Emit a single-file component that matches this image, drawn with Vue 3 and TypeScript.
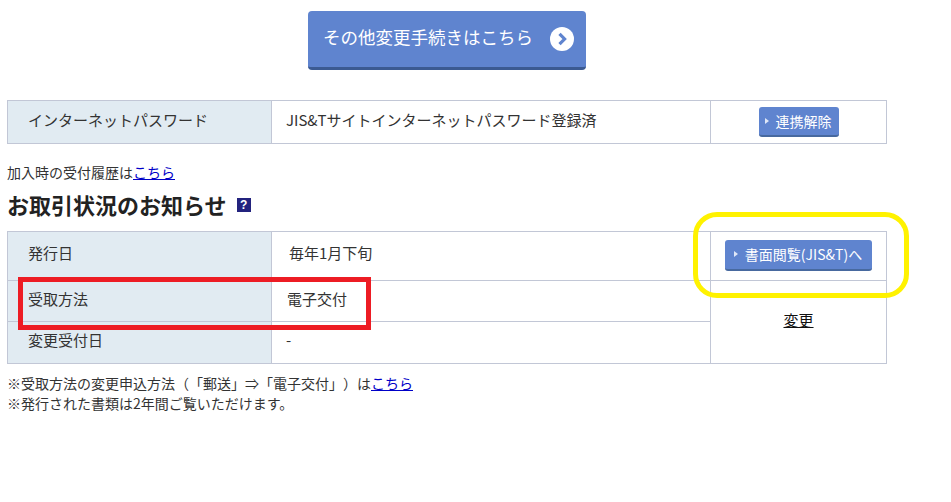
<script setup lang="ts">
const link = 'こちら'
</script>

<template>
  <main class="page">
    <div class="cta-wrap">
      <a class="cta">
        <span>その他変更手続きはこちら</span>
        <svg class="cta-icon" viewBox="0 0 24 24" width="24" height="24" aria-hidden="true">
          <circle cx="12" cy="12" r="12" fill="#fff" />
          <path d="M9.5 6.8 14.6 12l-5.1 5.2" fill="none" stroke="#5f84cf" stroke-width="3.2" />
        </svg>
      </a>
    </div>

    <table class="info first">
      <tbody>
        <tr class="r44">
          <th>インターネットパスワード</th>
          <td class="value">JIS&amp;Tサイトインターネットパスワード登録済</td>
          <td class="action"><a class="btn"><i class="tri"></i>連携解除</a></td>
        </tr>
      </tbody>
    </table>

    <p class="history">加入時の受付履歴は<a class="link">{{ link }}</a></p>

    <h2 class="title">
      お取引状況のお知らせ
      <span class="help">?</span>
    </h2>

    <table class="info second">
      <tbody>
        <tr class="r50">
          <th>発行日</th>
          <td class="value indent">毎年1月下旬</td>
          <td class="action lift"><a class="btn wide"><i class="tri"></i>書面閲覧(JIS&amp;T)へ</a></td>
        </tr>
        <tr class="r41">
          <th>受取方法</th>
          <td class="value shift">電子交付</td>
          <td class="action change" rowspan="2"><a class="plain">変更</a></td>
        </tr>
        <tr class="r42">
          <th>変更受付日</th>
          <td class="value">-</td>
        </tr>
      </tbody>
    </table>

    <div class="notes">
      <p>※受取方法の変更申込方法（「郵送」⇒「電子交付」）は<a class="link">{{ link }}</a></p>
      <p>※発行された書類は2年間ご覧いただけます。</p>
    </div>

    <div class="mark red"></div>
    <div class="mark yellow"></div>
  </main>
</template>

<style scoped>
.page {
  position: relative;
  width: 880px;
  height: 502px;
  margin-left: 7px;
  box-sizing: border-box;
  padding-top: 11px;
  color: #333;
  font-family: "Noto Sans CJK JP", "Liberation Sans", sans-serif;
  font-size: 14px;
  text-spacing-trim: space-all;
}
.cta-wrap {
  display: flex;
  justify-content: center;
}
.cta {
  display: flex;
  align-items: center;
  justify-content: space-between;
  box-sizing: border-box;
  width: 278px;
  height: 59px;
  padding: 0 12px 0 15px;
  border-radius: 4px;
  border-bottom: 3px solid #3b5a92;
  background: #5f84cf;
  color: #fff;
  font-size: 17.5px;
}
.cta span {
  position: relative;
  top: -3px;
}
.info {
  width: 880px;
  table-layout: fixed;
  border-collapse: collapse;
}
.first {
  margin-top: 30px;
}
.info th,
.info td {
  border: 1px solid #c2c7d6;
  padding: 0;
  font-weight: 400;
  text-align: left;
  vertical-align: middle;
}
.info th {
  width: 264px;
  box-sizing: border-box;
  padding-left: 20px;
  padding-bottom: 5px;
  background: #e1ebf2;
  font-size: 15px;
}
.info td.value {
  width: 439px;
  box-sizing: border-box;
  padding-left: 14px;
  padding-bottom: 5px;
  font-size: 15px;
}
.info td.indent {
  padding-left: 17px;
}
.info td.shift {
  padding-left: 15px;
}
.info td.action {
  text-align: center;
}
.info td.lift {
  padding-bottom: 2px;
}
.r50 th,
.info .r50 td.value {
  padding-bottom: 8px;
}
.r42 th,
.info .r42 td.value {
  padding-bottom: 7px;
}
.r44 { height: 43px; }
.r50 { height: 49px; }
.r41 { height: 41px; }
.r42 { height: 42px; }
.btn {
  display: inline-flex;
  align-items: center;
  box-sizing: border-box;
  height: 30px;
  padding: 0 7px 0 6px;
  border-radius: 3px;
  border-bottom: 2px solid #47699f;
  background: #5f84cf;
  color: #fff;
  font-size: 14px;
  white-space: nowrap;
}
.btn.wide {
  height: 31px;
  padding: 0 10px 0 9px;
}
.tri {
  width: 0;
  height: 0;
  margin-right: 7px;
  border-left: 4px solid #dfe7f7;
  border-top: 3px solid transparent;
  border-bottom: 3px solid transparent;
}
.history {
  margin: 19px 0 0;
  font-size: 14px;
  line-height: 19px;
}
.link {
  color: #0000c8;
  text-decoration: underline;
}
.title {
  display: flex;
  align-items: center;
  gap: 10px;
  margin: 7px 0 12px;
  font-size: 22px;
  font-weight: 700;
  line-height: 30px;
  color: #222;
}
.help {
  display: flex;
  align-items: center;
  justify-content: center;
  width: 14px;
  height: 14px;
  margin-top: 2px;
  background: #23237e;
  color: #fff;
  font-family: "Liberation Sans", sans-serif;
  font-size: 12px;
  font-weight: 700;
}
.info td.change {
  padding-bottom: 6px;
}
.plain {
  color: #111;
  text-decoration: underline;
  font-size: 15px;
}
.notes {
  margin-top: 9px;
  font-size: 14px;
  line-height: 20px;
}
.notes p {
  margin: 0;
}
.mark {
  position: absolute;
  box-sizing: border-box;
  pointer-events: none;
}
.red {
  left: 11px;
  top: 277px;
  width: 353px;
  height: 53px;
  border: 5px solid #ed1c24;
}
.yellow {
  left: 686px;
  top: 212px;
  width: 216px;
  height: 86px;
  border: 5px solid #fff200;
  border-radius: 24px;
}
</style>
